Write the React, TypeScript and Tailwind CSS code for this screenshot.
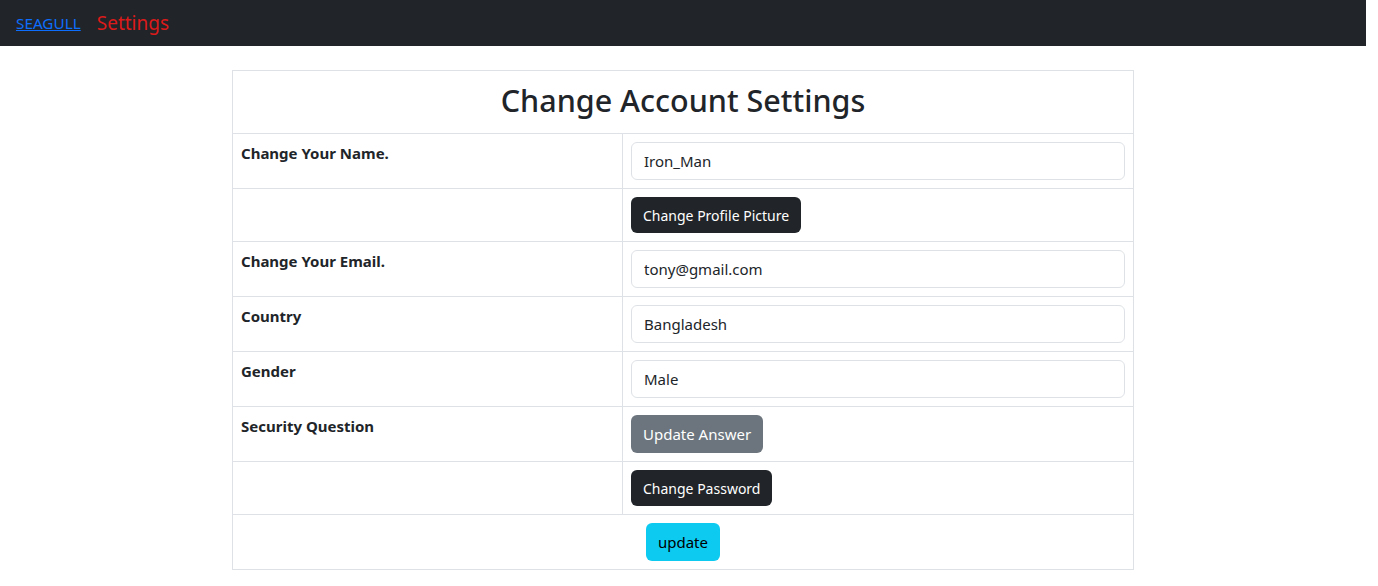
import React from 'react';

const font = { fontFamily: '"Noto Sans", "Open Sans", sans-serif' };

function Field({ value }: { value: string }) {
  return (
    <input
      readOnly
      value={value}
      className="block w-full h-[38px] px-3 rounded-md border border-[#dee2e6] bg-white text-[15px] text-[#212529] outline-none"
    />
  );
}

const cell = 'border border-[#dee2e6] p-2 align-top';

export default function App() {
  return (
    <div className="min-h-screen bg-white text-[#212529]" style={font}>
      {/* nav */}
      <nav className="w-[1366px] h-[46px] bg-[#212529] flex items-center px-4 gap-[16px]">
        <a href="#" className="text-[#0d6efd] underline text-[15.3px]">SEAGULL</a>
        <span className="text-[#dc1a1a] text-[19px]">Settings</span>
      </nav>

      <div className="w-[1366px] flex justify-center pt-6">
        <table className="w-[902px] border-collapse">
          <thead>
            <tr>
              <th colSpan={2} className="border border-[#dee2e6] h-[63px] pb-[3px] text-[30.5px] font-medium text-center">
                Change Account Settings
              </th>
            </tr>
          </thead>
          <tbody className="text-[15px]">
            <tr className="h-[55px]">
              <td className={`${cell} w-[390px] font-bold`}>Change Your Name.</td>
              <td className={cell}><Field value="Iron_Man" /></td>
            </tr>
            <tr className="h-[53px]">
              <td className={cell}></td>
              <td className={cell}>
                <button className="h-9 px-3 rounded-md bg-[#212529] text-white text-[14px]">Change Profile Picture</button>
              </td>
            </tr>
            <tr className="h-[55px]">
              <td className={`${cell} font-bold`}>Change Your Email.</td>
              <td className={cell}><Field value="tony@gmail.com" /></td>
            </tr>
            <tr className="h-[55px]">
              <td className={`${cell} font-bold`}>Country</td>
              <td className={cell}><Field value="Bangladesh" /></td>
            </tr>
            <tr className="h-[55px]">
              <td className={`${cell} font-bold`}>Gender</td>
              <td className={cell}><Field value="Male" /></td>
            </tr>
            <tr className="h-[55px]">
              <td className={`${cell} font-bold`}>Security Question</td>
              <td className={cell}>
                <button className="h-[38px] px-3 rounded-md bg-[#6c757d] text-white text-[15px]">Update Answer</button>
              </td>
            </tr>
            <tr className="h-[53px]">
              <td className={cell}></td>
              <td className={cell}>
                <button className="h-9 px-3 rounded-md bg-[#212529] text-white text-[14px]">Change Password</button>
              </td>
            </tr>
            <tr className="h-[55px]">
              <td colSpan={2} className={`${cell} text-center`}>
                <button className="h-[38px] px-3 rounded-md bg-[#0dcaf0] text-black text-[15px]">update</button>
              </td>
            </tr>
          </tbody>
        </table>
      </div>
    </div>
  );
}
